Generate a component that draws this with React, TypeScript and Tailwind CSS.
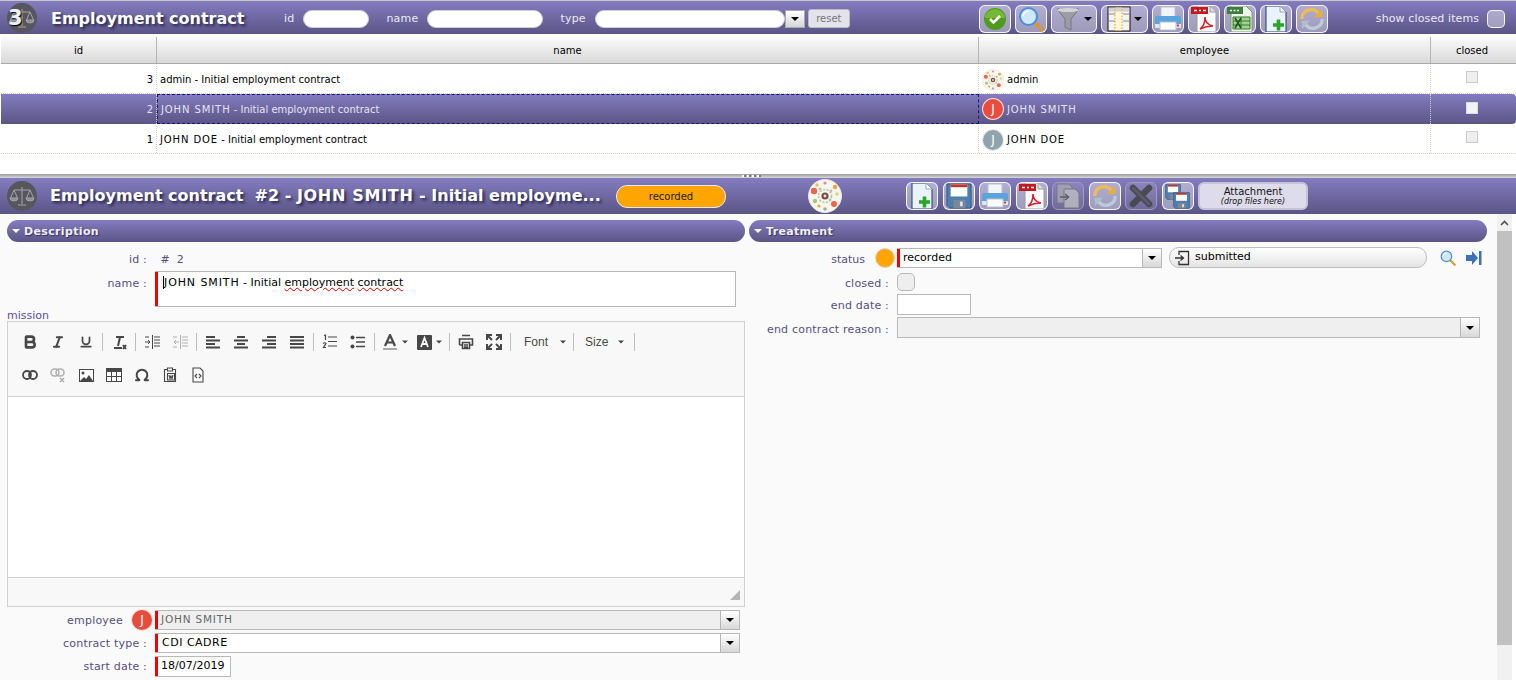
import React from 'react';
import { Bold, Italic, Underline, Omega } from 'lucide-react';

const BAR = 'bg-linear-to-b from-[#847cc0] to-[#5b5586]';

const Caret = ({ className = 'border-t-black' }: { className?: string }) => (
  <span className={`inline-block w-0 h-0 border-x-[4px] border-x-transparent border-t-[4px] ${className}`} />
);

const PETALS = [
  [6, 12, 3.2, '#e8674a'], [27, 8, 2.2, '#e9a33f'], [9, 6, 1.8, '#e6c36a'], [29, 15, 1.8, '#cfd88f'],
  [7, 22, 2.2, '#a9c47f'], [26, 25, 3, '#e8674a'], [17, 4, 1.6, '#d98aa0'], [17, 30, 1.8, '#8fb0bb'],
  [11, 27, 1.6, '#e9a33f'], [12, 10, 1.4, '#a7c9b0'], [23, 12, 1.4, '#d7b0c0'], [22, 21, 1.4, '#9fb7cf'],
] as const;

const Mandala = ({ size }: { size: number }) => (
  <svg width={size} height={size} viewBox="0 0 34 34" className="shrink-0">
    <circle cx="17" cy="17" r="16.5" fill="#f8f5ec" stroke="#e9e6e0" />
    {PETALS.map(([x, y, r, c], i) => <circle key={i} cx={x} cy={y} r={r} fill={c} />)}
    <circle cx="17" cy="17" r="6.5" fill="none" stroke="#b5c4a8" strokeWidth="1.6" strokeDasharray="2 1.5" />
    <circle cx="17" cy="17" r="3.6" fill="#7a4d42" />
    <circle cx="17" cy="17" r="1.4" fill="#efe6d8" />
  </svg>
);

const ScaleLogo = () => (
  <svg width="30" height="30" viewBox="0 0 30 30" className="shrink-0">
    <circle cx="15" cy="15" r="15" fill="#57565c" />
    <g fill="none" stroke="#a5a4ac" strokeWidth="1">
      <path d="M15 6v17M11 24h8M7 9h16M7 9l-3.5 8M7 9l3.5 8M23 9l-3.5 8M23 9l3.5 8" />
      <path d="M3 17a4 3 0 0 0 8 0zM19 17a4 3 0 0 0 8 0z" fill="#8d8c94" />
    </g>
  </svg>
);

const CheckIcon = () => (
  <svg width="24" height="24" viewBox="0 0 24 24">
    <circle cx="12" cy="12" r="11" fill="#4f9a1f" />
    <path d="M2 11a10 9 0 0 1 20 0z" fill="#86c440" opacity="0.7" />
    <path d="M7 12l3.5 3.5L17 9" fill="none" stroke="#fff" strokeWidth="2.6" />
  </svg>
);

const SearchIcon = ({ size = 26 }: { size?: number }) => (
  <svg width={size} height={size} viewBox="0 0 26 26">
    <path d="M16 16l8 8" stroke="#d9982f" strokeWidth="3.4" strokeLinecap="round" />
    <circle cx="10.5" cy="10.5" r="8.5" fill="#cfe6fb" stroke="#4a90d9" strokeWidth="2" />
    <path d="M5 10a6 6 0 0 1 6-5" stroke="#fff" strokeWidth="1.6" fill="none" />
  </svg>
);

const FunnelIcon = () => (
  <svg width="26" height="26" viewBox="0 0 26 26">
    <path d="M2 3h22l-8 10v11l-6-3v-8z" fill="#9c9ca4" stroke="#77777f" />
    <ellipse cx="13" cy="4" rx="11" ry="2" fill="#d4d4d8" />
  </svg>
);

const ColumnsIcon = () => (
  <svg width="24" height="26" viewBox="0 0 24 26">
    <rect x="1" y="1" width="22" height="24" fill="#f3f3f0" stroke="#111" />
    <rect x="8" y="1.5" width="7" height="23" fill="#fff6d8" stroke="#e0a020" strokeDasharray="1.5 1.5" />
    <path d="M16 8h7M16 15h7M1 8h7M1 15h7" stroke="#888" />
    <rect x="1.5" y="1.5" width="21" height="4" fill="#bbb" opacity="0.6" />
  </svg>
);

const PrintIcon = () => (
  <svg width="28" height="26" viewBox="0 0 28 26">
    <rect x="7" y="1" width="14" height="10" fill="#f2f5f8" stroke="#b6c2cc" />
    <rect x="1" y="10" width="26" height="10" rx="2" fill="#5aa3dc" />
    <rect x="1" y="18" width="26" height="4" fill="#dfe4e8" />
    <rect x="6" y="16" width="16" height="8" fill="#fff" stroke="#b6c2cc" />
    <rect x="23" y="18.5" width="2" height="2" fill="#d33" />
  </svg>
);

const PdfIcon = () => (
  <svg width="26" height="28" viewBox="0 0 26 28">
    <path d="M6 1h13l6 6v20H6z" fill="#fbfbfb" stroke="#9a9a9a" />
    <path d="M19 1v6h6" fill="#ddd" stroke="#9a9a9a" />
    <rect x="0" y="2" width="17" height="7" fill="#c8161d" />
    <path d="M3 5.5h3M8 5.5h2M12 5.5h3" stroke="#fff" strokeWidth="1.6" />
    <path d="M9 24c3-2 5-7 5-12 0 5 3 8 8 9-5 0-9 1-13 3z" fill="none" stroke="#d3222a" strokeWidth="1.5" />
  </svg>
);

const ExcelIcon = () => (
  <svg width="26" height="28" viewBox="0 0 26 28">
    <path d="M4 1h15l6 6v20H4z" fill="#eef5e8" stroke="#7f9a70" />
    <rect x="0" y="2" width="16" height="7" fill="#3f7d3c" />
    <path d="M3 5.5h10" stroke="#dfe" strokeWidth="1.6" strokeDasharray="2 1.5" />
    <path d="M6 12h17v12H6zM14 12v12M6 16h17M6 20h17" fill="#a7cf8e" stroke="#2f7a30" />
    <path d="M8 13l6 10M14 13L8 23" stroke="#1e5a20" strokeWidth="1.6" />
  </svg>
);

const NewDocIcon = () => (
  <svg width="24" height="28" viewBox="0 0 24 28">
    <path d="M2 1h14l6 6v20H2z" fill="#eaf3fa" stroke="#1d3f66" strokeWidth="1" />
    <path d="M16 1v6h6" fill="#fff" stroke="#90a8bc" />
    <path d="M9 20h11M14.5 14.5v11" stroke="#2aa52a" strokeWidth="3.6" />
  </svg>
);

const RefreshIcon = () => (
  <svg width="26" height="26" viewBox="0 0 28 28" fill="none" strokeWidth="3.6">
    <path d="M3 14A10 10 0 0 1 21 8" stroke="#f0bc50" />
    <path d="M25 3v9h-9z" fill="#e8ae3c" stroke="none" />
    <path d="M25 14A10 10 0 0 1 7 20" stroke="#bccbd6" />
    <path d="M3 25v-9h9z" fill="#aebfcc" stroke="none" />
  </svg>
);

const SaveIcon = ({ size = 28 }: { size?: number }) => (
  <svg width={size} height={size} viewBox="0 0 28 28">
    <path d="M1 1h26v26H4l-3-3z" fill="#4d7fb0" stroke="#2e5375" />
    <rect x="5" y="1.5" width="18" height="13" fill="#fdfdfd" />
    <rect x="5" y="1.5" width="18" height="3" fill="#c9302c" />
    <rect x="8" y="18" width="13" height="9" fill="#7b8794" />
    <rect x="15" y="20" width="3" height="5" fill="#dde" />
  </svg>
);

const CopyIcon = () => (
  <svg width="26" height="26" viewBox="0 0 26 26" opacity="0.8">
    <path d="M2 1h12l3 3v16H2z" fill="#a8a8ae" stroke="#77777e" />
    <path d="M9 6h11l4 4v15H9z" fill="#bfbfc4" stroke="#77777e" />
    <path d="M5 14h8M10 11l3.5 3-3.5 3" stroke="#55555c" strokeWidth="1.6" fill="none" />
  </svg>
);

const CrossIcon = () => (
  <svg width="26" height="26" viewBox="0 0 26 26">
    <path d="M5 5l16 16M21 5L5 21" stroke="#4a4a55" strokeWidth="6.5" strokeLinecap="round" />
    <path d="M5 5l16 16" stroke="#5d5d69" strokeWidth="2.5" strokeLinecap="round" />
  </svg>
);

const CopySaveIcon = () => (
  <div className="relative w-[25px] h-[25px]">
    <div className="absolute left-0 top-0"><SaveIcon size={16} /></div>
    <div className="absolute right-0 bottom-0"><SaveIcon size={17} /></div>
  </div>
);

const NavIcon = () => (
  <svg width="16" height="14" viewBox="0 0 16 14">
    <path d="M0 4h6V0l6 7-6 7v-4H0z" fill="#3a74b8" />
    <rect x="13" y="0" width="2.5" height="14" fill="#3a74b8" />
  </svg>
);

const ToolBtn = ({ children, wide, off }: { children: React.ReactNode; wide?: number; off?: boolean }) => (
  <div
    className={`h-[28px] shrink-0 rounded-[6px] border flex items-center justify-center gap-[3px] overflow-hidden ${off ? 'border-[#9f9cc0] bg-white/10' : 'border-white/90 bg-white/40'} ${wide === 46 ? 'w-[46px]' : wide === 47 ? 'w-[47px]' : 'w-[32px]'}`}
  >
    {children}
  </div>
);

const SearchField = ({ label, w }: { label: string; w: string }) => (
  <div className="flex items-center gap-[9px]">
    <span className="pt-[2px] text-[11px] tracking-[0.2px] text-[#eceaf6]">{label}</span>
    <span className={`h-[18px] ${w} rounded-[9px] bg-white border border-[#cfcde0]`} />
  </div>
);

const Avatar = ({ tone }: { tone: 'red' | 'gray' }) => (
  <span
    className={`w-[22px] h-[22px] shrink-0 rounded-full border border-white/80 flex items-center justify-center text-white text-[12px] ${tone === 'red' ? 'bg-[#e84c3d]' : 'bg-[#8fa3ad]'}`}
  >
    J
  </span>
);

// capitals run wider in the original font than in DejaVu
const Caps = ({ children }: { children: React.ReactNode }) => <span className="tracking-[0.9px]">{children}</span>;

const ROWS = [
  { id: 3, lead: 'admin', rest: ' - Initial employment contract', who: 'admin' },
  { id: 2, lead: 'JOHN SMITH', rest: ' - Initial employment contract', who: 'JOHN SMITH', on: true },
  { id: 1, lead: 'JOHN DOE', rest: ' - Initial employment contract', who: 'JOHN DOE' },
];

const COLS = 'grid grid-cols-[156px_822px_452px_82px]';

const ListPane = () => (
  <div className="h-[174px] bg-white">
    <div className="h-px bg-[#c9c9c9]" />
    <div className={`h-[33px] ${BAR} flex items-center pt-[2px]`}>
      <div className="relative ml-[7px] w-[30px] h-[30px] shrink-0 -mt-[2px]">
        <ScaleLogo />
        <span className="absolute left-px top-[3px] text-[21px] leading-[24px] font-bold text-[#f0f0f0] [text-shadow:1px_1px_1px_#000]">3</span>
      </div>
      <span className="ml-[14px] w-[216px] text-[16px] font-bold text-white [text-shadow:2px_2px_3px_#26234a]">Employment contract</span>
      <div className="flex items-center gap-[17px] ml-[17px]">
        <SearchField label="id" w="w-[66px]" />
        <SearchField label="name" w="w-[116px]" />
        <SearchField label="type" w="w-[190px]" />
      </div>
      <span className="h-[18px] w-[20px] flex items-center justify-center bg-linear-to-b from-white to-[#d5d5d5] border border-[#aaa]"><Caret /></span>
      <span className="ml-[3px] h-[19px] w-[42px] rounded-[3px] bg-[#e4e3ec] border border-[#bbb] flex items-center justify-center text-[10px] text-[#777]">reset</span>
      <div className="ml-[129px] flex items-center gap-[4px]">
        <ToolBtn><CheckIcon /></ToolBtn>
        <ToolBtn><SearchIcon /></ToolBtn>
        <ToolBtn wide={46}><FunnelIcon /><Caret /></ToolBtn>
        <ToolBtn wide={47}><ColumnsIcon /><Caret /></ToolBtn>
        <ToolBtn><PrintIcon /></ToolBtn>
        <ToolBtn><PdfIcon /></ToolBtn>
        <ToolBtn><ExcelIcon /></ToolBtn>
        <ToolBtn><NewDocIcon /></ToolBtn>
        <ToolBtn><RefreshIcon /></ToolBtn>
      </div>
      <span className="ml-[48px] pt-[2px] text-[11px] tracking-[0.12px] text-[#eceaf6] whitespace-nowrap">show closed items</span>
      <span className="ml-[8px] w-[18px] h-[18px] rounded-[5px] bg-white/40 border border-white/90" />
    </div>
    <div className={`${COLS} h-[30px] ml-px pt-[3px] bg-linear-to-b from-white to-[#d9d9d9] border-b border-[#a9a9a9] text-[10px] text-black text-center`}>
      <div className="flex items-center justify-center border-r border-[#b5b5b5]">id</div>
      <div className="flex items-center justify-center border-r border-[#b5b5b5]">name</div>
      <div className="flex items-center justify-center border-r border-[#b5b5b5]">employee</div>
      <div className="flex items-center justify-center">closed</div>
    </div>
    {ROWS.map((r) => (
      <div
        key={r.id}
        className={`${COLS} h-[30px] ml-px text-[10px] whitespace-pre ${r.on ? `${BAR} text-[#e6e4f2] rounded-r-[4px]` : 'text-black border-b border-dotted border-[#d8d2c4] pt-[2px]'}`}
      >
        <div className="flex items-center justify-end pr-[3px] border-r border-dotted border-[#d8cfc0]">{r.id}</div>
        <div className={`flex items-center pl-[3px] ${r.on ? 'border border-dashed border-[#14147a]' : 'border-r border-dotted border-[#d8cfc0]'}`}>
          <span>{r.on || r.id === 1 ? <Caps>{r.lead}</Caps> : r.lead}{r.rest}</span>
        </div>
        <div className="flex items-center gap-[3px] pl-[3px] border-r border-dotted border-[#d8cfc0]">
          {r.id === 3 ? <Mandala size={22} /> : <Avatar tone={r.id === 2 ? 'red' : 'gray'} />}
          {r.id === 3 ? r.who : <Caps>{r.who}</Caps>}
        </div>
        <div className="flex items-center justify-center">
          <span className={`w-[12px] h-[12px] border ${r.on ? 'mb-[2px] bg-[#f4f4f4] border-[#ddd]' : 'mb-[5px] bg-[#eee] border-[#ccc]'}`} />
        </div>
      </div>
    ))}
  </div>
);

const Splitter = () => (
  <div className="relative h-[4px] bg-linear-to-b from-[#9b9b9b] to-[#d9d9d9]">
    <div className="absolute left-[742px] top-px h-[2px] flex">
      {[0, 1, 2, 3].map((i) => (
        <span key={i} className="flex w-[5px]">
          <span className="w-[2px] bg-white" />
          <span className="w-[2px] bg-[#777]" />
        </span>
      ))}
    </div>
  </div>
);

const DetailBar = () => (
  <div className={`h-[36px] ${BAR} flex items-center`}>
    <div className="ml-[7px]"><ScaleLogo /></div>
    <span className="ml-[13px] w-[566px] whitespace-pre text-[16px] font-bold text-white [text-shadow:2px_2px_3px_#26234a]">
      Employment contract  #2 - <span className="tracking-[0.7px]">JOHN SMITH</span> - Initial employme...
    </span>
    <span className="w-[110px] h-[23px] rounded-[11px] bg-[#ffa500] border border-[#e9e7f2] flex items-center justify-center text-[10px] text-[#222]">recorded</span>
    <div className="ml-[82px]"><Mandala size={34} /></div>
    <div className="ml-[64px] flex items-center gap-[4.5px]">
      <ToolBtn><NewDocIcon /></ToolBtn>
      <ToolBtn><SaveIcon size={26} /></ToolBtn>
      <ToolBtn><PrintIcon /></ToolBtn>
      <ToolBtn><PdfIcon /></ToolBtn>
      <ToolBtn off><CopyIcon /></ToolBtn>
      <ToolBtn><RefreshIcon /></ToolBtn>
      <ToolBtn off><CrossIcon /></ToolBtn>
      <ToolBtn><CopySaveIcon /></ToolBtn>
      <div className="w-[110px] h-[28px] pt-[2px] rounded-[6px] bg-[#dedcea] border-2 border-[#c5c3d8] flex flex-col items-center justify-center text-[#111] leading-[10px]">
        <span className="text-[10px]">Attachment</span>
        <span className="text-[8px] italic">(drop files here)</span>
      </div>
    </div>
  </div>
);

const SectionHead = ({ title }: { title: string }) => (
  <div className={`h-[22px] rounded-[11px] ${BAR} flex items-center pl-[5px] gap-[4px]`}>
    <Caret className="border-t-white" />
    <span className="pt-[2px] text-[11px] tracking-[0.35px] font-bold text-[#f0eff8] [text-shadow:1px_1px_1px_#38345e]">{title}</span>
  </div>
);

const Required = () => <span className="w-[3px] self-stretch shrink-0 bg-[#f00000]" />;

const DropBtn = () => (
  <span className="w-[19px] self-stretch shrink-0 flex items-center justify-center border-l border-[#b5b5b5] bg-linear-to-b from-white to-[#d8d8d8]"><Caret /></span>
);

const Ed = ({ children }: { children: React.ReactNode }) => (
  <span className="w-[28px] h-[24px] shrink-0 flex items-center justify-center text-[#474747]">{children}</span>
);

const Sep = () => <span className="w-px h-[18px] ml-[2px] mr-[2px] bg-[#bcbcbc] shrink-0" />;

const Lines = ({ d, stroke = 2 }: { d: string; stroke?: number }) => (
  <svg width="16" height="16" viewBox="0 0 16 16" fill="none" stroke="currentColor" strokeWidth={stroke}><path d={d} /></svg>
);

const MiniCaret = () => <Caret className="border-t-[#474747] scale-75" />;

const EditorToolbar = () => (
  <div className="h-[75px] bg-[#f8f8f8] border-b border-[#d1d1d1] pl-[8px]">
    <div className="flex items-center h-[24px] pt-0 translate-y-[8px]">
      <Ed><Bold size={16} strokeWidth={4} /></Ed>
      <Ed><Italic size={14} strokeWidth={3.4} /></Ed>
      <Ed><Underline size={14} strokeWidth={3} /></Ed>
      <Sep />
      <Ed><Lines stroke={2} d="M5 3h8M9 3l-2 9M3 14h8M12 11l3 4M15 11l-3 4" /></Ed>
      <Sep />
      <Ed><Lines stroke={1} d="M8.5 1v14M10 3h6M10 6h6M10 9h6M10 12h6M1 8h5M4 6l2 2-2 2M1 3h4M1 13h4" /></Ed>
      <span className="opacity-40"><Ed><Lines stroke={1} d="M8.5 1v14M10 3h6M10 6h6M10 9h6M10 12h6M2 8h5M4 6L2 8l2 2M1 3h4M1 13h4" /></Ed></span>
      <Sep />
      <Ed><Lines d="M1 3h9M1 6.5h14M1 10h9M1 13.5h14" /></Ed>
      <Ed><Lines d="M4 3h8M1 6.5h14M4 10h8M1 13.5h14" /></Ed>
      <Ed><Lines d="M6 3h9M1 6.5h14M6 10h9M1 13.5h14" /></Ed>
      <Ed><Lines d="M1 3h14M1 6.5h14M1 10h14M1 13.5h14" /></Ed>
      <Sep />
      <Ed><Lines stroke={1.2} d="M6 3h9M6 7.5h9M6 12h9M2 1.5l1.5-.5v5M1 9.5q2-1.5 3 0L1.5 13.5H4" /></Ed>
      <Ed>
        <svg width="16" height="16" viewBox="0 0 16 16"><path d="M6 3.5h9M6 8h9M6 12.5h9" stroke="currentColor" strokeWidth="1.4" /><circle cx="2.5" cy="3.5" r="2" fill="currentColor" /><circle cx="2.5" cy="12.5" r="2" fill="currentColor" /></svg>
      </Ed>
      <Sep />
      <span className="w-[36px] shrink-0 flex items-center justify-center gap-[3px] text-[#474747]">
        <svg width="16" height="16" viewBox="0 0 16 16" fill="none"><path d="M3 12L8 1l5 11M5 8.5h6" stroke="currentColor" strokeWidth="2.2" /><path d="M1 15h14" stroke="#a8a8a8" strokeWidth="2" /></svg>
        <MiniCaret />
      </span>
      <span className="w-[34px] shrink-0 flex items-center justify-center gap-[3px] text-[#474747]">
        <svg width="15" height="15" viewBox="0 0 15 15"><rect width="15" height="15" rx="1" fill="currentColor" /><path d="M4 12l3.5-9 3.5 9M5 9h5" fill="none" stroke="#f8f8f8" strokeWidth="1.8" /></svg>
        <MiniCaret />
      </span>
      <Sep />
      <Ed><Lines stroke={1.6} d="M4 1.5h8M1.5 11V5h13v6h-3M1.5 11h3M4.5 8.5h7v6h-7zM6 11h4M6 13h4" /></Ed>
      <Ed><Lines d="M1 6V1h5M10 1h5v5M1 10v5h5M15 10v5h-5M2 2l4 4M14 2l-4 4M2 14l4-4M14 14l-4-4" /></Ed>
      <Sep />
      <span className="w-[58px] pl-[11px] shrink-0 flex items-center gap-[11px] text-[12px] text-[#484848] [font-family:'Liberation_Sans',sans-serif]">Font<MiniCaret /></span>
      <Sep />
      <span className="w-[56px] pl-[9px] shrink-0 flex items-center gap-[9px] text-[12px] text-[#484848] [font-family:'Liberation_Sans',sans-serif]">Size<MiniCaret /></span>
      <Sep />
    </div>
    <div className="flex items-center h-[24px] mt-[9px] translate-y-[8px]">
      <Ed>
        <svg width="16" height="10" viewBox="0 0 16 10" fill="none" stroke="currentColor" strokeWidth="1.8"><rect x="1" y="1" width="8" height="8" rx="4" /><rect x="7" y="1" width="8" height="8" rx="4" /></svg>
      </Ed>
      <span className="opacity-40">
        <Ed>
          <svg width="16" height="15" viewBox="0 0 16 15" fill="none" stroke="currentColor" strokeWidth="1.6"><rect x="1" y="1" width="8" height="7" rx="3.5" /><rect x="6" y="1" width="8" height="7" rx="3.5" /><path d="M10 10l4 4M14 10l-4 4" /></svg>
        </Ed>
      </span>
      <Ed>
        <svg width="15" height="13" viewBox="0 0 15 13"><rect x="0.5" y="0.5" width="14" height="12" fill="#fff" stroke="currentColor" /><circle cx="4" cy="4" r="1.5" fill="currentColor" /><path d="M1 12l4-4 2 2 3-4 4 6z" fill="currentColor" /></svg>
      </Ed>
      <Ed>
        <svg width="16" height="14" viewBox="0 0 16 14"><rect x="0.5" y="0.5" width="15" height="13" fill="#fff" stroke="currentColor" /><rect x="0.5" y="0.5" width="15" height="3.5" fill="currentColor" /><path d="M5.5 4v9M10.5 4v9M1 8.5h14" stroke="currentColor" /></svg>
      </Ed>
      <Ed><Omega size={16} strokeWidth={3} /></Ed>
      <Ed><Lines stroke={1.1} d="M5 2.5H2.5v12h11v-12H11M5.5 1h5v3h-5zM5.5 6.5h7v6.5h-7zM7 8l1 3.5L9 9l1 2.5L11 8" /></Ed>
      <Ed><Lines stroke={1.1} d="M3 1h7l3 3v11H3zM7 7L5 9l2 2M9 7l2 2-2 2" /></Ed>
    </div>
  </div>
);

const Editor = () => (
  <div className="h-[286px] border border-[#d1d1d1] bg-white flex flex-col">
    <EditorToolbar />
    <div className="flex-1" />
    <div className="relative h-[29px] bg-[#f8f8f8] border-t border-[#d1d1d1]">
      <span className="absolute right-[4px] bottom-[6px] w-0 h-0 border-l-[10px] border-l-transparent border-b-[10px] border-b-[#b5b5b5]" />
    </div>
  </div>
);

const LeftLabel = ({ text, drop = 'pt-[2px]' }: { text: string; drop?: string }) => (
  <span className={`w-[148px] shrink-0 pr-[8px] text-right text-[11px] tracking-[0.2px] text-[#55507f] ${drop}`}>{text}</span>
);

const LeftColumn = () => (
  <div className="w-[738px] ml-[7px] shrink-0">
    <SectionHead title="Description" />
    <div className="flex items-center h-[20px] mt-[7px]">
      <LeftLabel text="id :" />
      <span className="pl-[2px] pt-[2px] text-[11px] text-[#55507f] whitespace-pre"> #  2</span>
    </div>
    <div className="flex mt-[2px]">
      <span className="w-[148px] shrink-0 pr-[8px] pt-[5px] text-right text-[11px] tracking-[0.2px] text-[#55507f]">name :</span>
      <div className="w-[581px] h-[36px] flex border border-l-0 border-[#b8b8b8] bg-white">
        <Required />
        <span className="pl-[5px] pt-[3px] text-[11px] text-black">
          <span className="border-l border-black"><Caps>JOHN SMITH</Caps> - Initial </span>
          <span className="underline decoration-wavy decoration-[#d00] decoration-1">employment</span>{' '}
          <span className="underline decoration-wavy decoration-[#d00] decoration-1">contract</span>
        </span>
      </div>
    </div>
    <div className="h-[14px] leading-[18px] text-[11px] text-[#5b4f96]">mission</div>
    <Editor />
    <div className="flex items-center h-[20px] mt-[3px]">
      <span className="w-[116px] shrink-0 pt-[2px] text-right text-[11px] tracking-[0.2px] text-[#55507f]">employee</span>
      <span className="ml-[8px]"><Avatar tone="red" /></span>
      <span className="ml-[2px] flex items-center w-[585px] h-[20px] bg-[#efefef] border border-l-0 border-[#b8b8b8]">
        <Required />
        <span className="flex-1 pl-[3px] text-[10.5px] tracking-[0.8px] text-[#666]">JOHN SMITH</span>
        <DropBtn />
      </span>
    </div>
    <div className="flex items-center h-[20px] mt-[3px]">
      <LeftLabel text="contract type :" />
      <span className="flex items-center w-[585px] h-[20px] bg-white border border-l-0 border-[#b8b8b8]">
        <Required />
        <span className="flex-1 pl-[4px] text-[11px] tracking-[0.5px] text-black">CDI CADRE</span>
        <DropBtn />
      </span>
    </div>
    <div className="flex items-center h-[21px] mt-[3px]">
      <LeftLabel text="start date :" />
      <span className="flex items-center w-[76px] h-[21px] bg-white border border-l-0 border-[#b8b8b8]">
        <Required />
        <span className="pl-[3px] text-[11px] text-black">18/07/2019</span>
      </span>
    </div>
  </div>
);

const RightColumn = () => (
  <div className="w-[738px] ml-[4px] shrink-0">
    <SectionHead title="Treatment" />
    <div className="flex items-center h-[21px] mt-[5px]">
      <span className="w-[116px] shrink-0 pt-[6px] text-right text-[11px] text-[#55507f]">status</span>
      <span className="ml-[10px] w-[20px] h-[20px] rounded-full bg-[#ffa500] border border-[#d8d8d8]" />
      <span className="ml-[2px] flex items-center w-[265px] h-[20px] bg-white border border-l-0 border-[#b8b8b8]">
        <Required />
        <span className="flex-1 pl-[3px] pt-[2px] text-[11px] text-black">recorded</span>
        <DropBtn />
      </span>
      <span className="ml-[7px] flex items-center gap-[5px] w-[258px] h-[21px] pl-[4px] rounded-[10px] bg-linear-to-b from-white to-[#e4e4e4] border border-[#bdbdbd] text-[11px] text-black">
        <svg width="16" height="16" viewBox="0 0 16 16" fill="none" stroke="#333" strokeWidth="1.3"><path d="M5 5V1.5h9.5v13H5V11M1 8h8M6.5 5.5L9.5 8l-3 2.5" /></svg>
        <span className="-mt-px">submitted</span>
      </span>
      <span className="ml-[13px]"><SearchIcon size={16} /></span>
      <span className="ml-[10px]"><NavIcon /></span>
    </div>
    <div className="flex items-center h-[18px] mt-[5px]">
      <LeftLabel text="closed :" drop="pt-[4px]" />
      <span className="w-[18px] h-[18px] rounded-[5px] bg-[#eee] border border-[#b8b8b8]" />
    </div>
    <div className="flex items-center h-[21px] mt-[3px]">
      <LeftLabel text="end date :" drop="pt-[4px]" />
      <span className="w-[74px] h-[21px] bg-white border border-[#b8b8b8]" />
    </div>
    <div className="flex items-center h-[21px] mt-[2px]">
      <LeftLabel text="end contract reason :" drop="pt-[6px]" />
      <span className="flex w-[583px] h-[21px] bg-[#efefef] border border-[#b8b8b8]">
        <span className="flex-1" />
        <DropBtn />
      </span>
    </div>
  </div>
);

const Scrollbar = () => (
  <div className="w-[15px] ml-[10px] shrink-0 bg-[#f1f1f1] flex flex-col">
    <div className="h-[17px] flex items-center justify-center">
      <svg width="9" height="6" viewBox="0 0 9 6" fill="none" stroke="#505050" strokeWidth="1.6"><path d="M1 5l3.5-3.5L8 5" /></svg>
    </div>
    <div className="h-[414px] bg-[#c1c1c1]" />
  </div>
);

export default function App() {
  return (
    <div className="w-[1516px] h-[680px] overflow-hidden bg-white font-['DejaVu_Sans',sans-serif]">
      <ListPane />
      <Splitter />
      <DetailBar />
      <div className="h-[466px] flex bg-[#fafafa] overflow-hidden">
        <div className="flex-1 flex pt-[6px] items-start">
          <LeftColumn />
          <RightColumn />
        </div>
        <Scrollbar />
        <div className="w-[4px] bg-white shrink-0" />
      </div>
    </div>
  );
}
